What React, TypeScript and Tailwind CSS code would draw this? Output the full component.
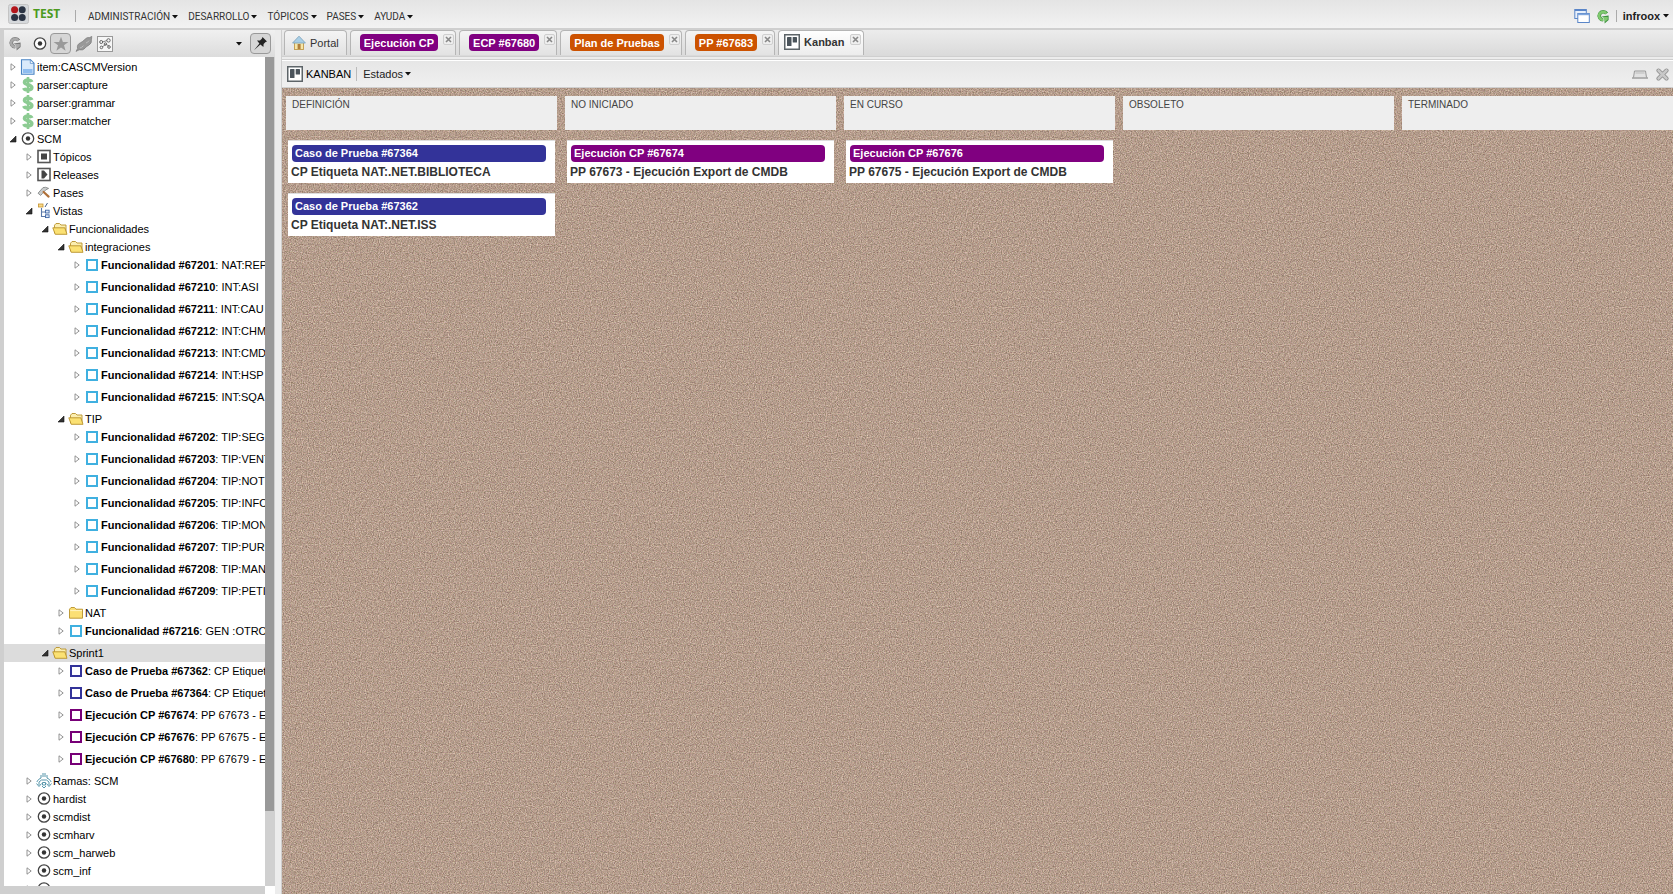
import React from "react";

type Kind =
  | "doc" | "dollar" | "target" | "topics" | "release" | "hammer" | "views"
  | "folderOpen" | "folder" | "sky" | "navy" | "purple" | "branch";

type Row = { level: number; icon: Kind; label?: string; strong?: string; open?: boolean; selected?: boolean };

const f = (level: number, id: string, label: string): Row => ({ level, icon: "sky", strong: `Funcionalidad #${id}`, label });

const rows: Row[] = [
  { level: 0, icon: "doc", label: "item:CASCMVersion" },
  { level: 0, icon: "dollar", label: "parser:capture" },
  { level: 0, icon: "dollar", label: "parser:grammar" },
  { level: 0, icon: "dollar", label: "parser:matcher" },
  { level: 0, icon: "target", label: "SCM", open: true },
  { level: 1, icon: "topics", label: "Tópicos" },
  { level: 1, icon: "release", label: "Releases" },
  { level: 1, icon: "hammer", label: "Pases" },
  { level: 1, icon: "views", label: "Vistas", open: true },
  { level: 2, icon: "folderOpen", label: "Funcionalidades", open: true },
  { level: 3, icon: "folderOpen", label: "integraciones", open: true },
  f(4, "67201", "NAT:REP"),
  f(4, "67210", "INT:ASI"),
  f(4, "67211", "INT:CAU"),
  f(4, "67212", "INT:CHM"),
  f(4, "67213", "INT:CMDB"),
  f(4, "67214", "INT:HSP"),
  f(4, "67215", "INT:SQA"),
  { level: 3, icon: "folderOpen", label: "TIP", open: true },
  f(4, "67202", "TIP:SEGU"),
  f(4, "67203", "TIP:VENT"),
  f(4, "67204", "TIP:NOTIF"),
  f(4, "67205", "TIP:INFOR"),
  f(4, "67206", "TIP:MONIT"),
  f(4, "67207", "TIP:PURG"),
  f(4, "67208", "TIP:MANT"),
  f(4, "67209", "TIP:PETIC"),
  { level: 3, icon: "folder", label: "NAT" },
  f(3, "67216", "GEN :OTROS"),
  { level: 2, icon: "folderOpen", label: "Sprint1", open: true, selected: true },
  { level: 3, icon: "navy", strong: "Caso de Prueba #67362", label: "CP Etiqueta" },
  { level: 3, icon: "navy", strong: "Caso de Prueba #67364", label: "CP Etiqueta" },
  { level: 3, icon: "purple", strong: "Ejecución CP #67674", label: "PP 67673 - Ejec" },
  { level: 3, icon: "purple", strong: "Ejecución CP #67676", label: "PP 67675 - Ejec" },
  { level: 3, icon: "purple", strong: "Ejecución CP #67680", label: "PP 67679 - Ejec" },
  { level: 1, icon: "branch", label: "Ramas: SCM" },
  { level: 1, icon: "target", label: "hardist" },
  { level: 1, icon: "target", label: "scmdist" },
  { level: 1, icon: "target", label: "scmharv" },
  { level: 1, icon: "target", label: "scm_harweb" },
  { level: 1, icon: "target", label: "scm_inf" },
  { level: 1, icon: "target" },
];

const indent = ["pl-[3px]", "pl-[19px]", "pl-[35px]", "pl-[51px]", "pl-[67px]"];

const Target = () => (
  <svg width="16" height="16" viewBox="0 0 16 16">
    <circle cx="8" cy="7.5" r="5.7" fill="#fff" stroke="#444" strokeWidth="1.3" />
    <circle cx="8" cy="7.5" r="2.2" fill="#333" />
  </svg>
);

const Board = () => (
  <svg width="16" height="16" viewBox="0 0 16 16">
    <rect x="0.75" y="0.75" width="14.5" height="14.5" fill="#fff" stroke="#5d6468" strokeWidth="1.5" />
    <rect x="3" y="3" width="4.5" height="9" rx=".6" fill="#4b545b" />
    <rect x="8.7" y="3" width="4.3" height="5.5" rx=".6" fill="#4b545b" />
  </svg>
);

const Swirl = ({ fill, edge }: { fill: string; edge: string }) => (
  <svg width="14" height="15" viewBox="0 0 14 15">
    <path d="M10.6 4.6 A4 4 0 1 0 7.2 10.8" fill="none" stroke={edge} strokeWidth="3.6" />
    <path d="M5.6 7.4 L12.6 6.6 V11 L8.6 14.4 V9 Z" fill={edge} />
    <path d="M10.2 4.6 A3.9 3.9 0 1 0 7.4 10.7" fill="none" stroke={fill} strokeWidth="2.4" />
    <path d="M7.4 8 H11.8 V10.6 L9 12.8 Z" fill={fill} />
  </svg>
);

function Icon({ kind }: { kind: Kind }) {
  switch (kind) {
    case "doc":
      return (
        <svg width="16" height="16" viewBox="0 0 16 16">
          <path d="M1.5 .7 H10.5 L14 4.2 V15.3 H1.5 Z" fill="#d9eafb" stroke="#4a84c4" strokeWidth="1.1" />
          <path d="M10.3 .8 V4.4 H14 Z" fill="#fff" stroke="#4a84c4" strokeWidth=".7" />
          <path d="M3 10 H12.5 V14 H3 Z" fill="#8fbdf0" />
        </svg>
      );
    case "dollar":
      return (
        <svg width="16" height="16" viewBox="0 0 16 16" fill="none" stroke="#8ccb92">
          <path d="M8 0 V16" strokeWidth="2.6" />
          <path d="M11.8 5 C11.2 2.6 4.4 2.2 4.4 5.2 C4.4 8.2 11.9 7.3 11.9 10.6 C11.9 13.8 4.6 13.6 3.8 11" strokeWidth="3.4" />
        </svg>
      );
    case "target":
      return <Target />;
    case "topics":
      return (
        <svg width="16" height="16" viewBox="0 0 16 16">
          <rect x="2" y="1.5" width="12" height="12" fill="#fff" stroke="#555" strokeWidth="1.6" />
          <rect x="5" y="4.5" width="6" height="6" fill="#444" />
        </svg>
      );
    case "release":
      return (
        <svg width="16" height="16" viewBox="0 0 16 16">
          <rect x="2" y="1.5" width="12" height="12" fill="#fff" stroke="#555" strokeWidth="1.6" />
          <path d="M5.5 3.5 L8 3.5 L11.5 7.5 L8 11.5 L5.5 11.5 Z" fill="#444" />
        </svg>
      );
    case "hammer":
      return (
        <svg width="16" height="16" viewBox="0 0 16 16">
          <path d="M2 8.2 L7 2.6 Q9.5 1.6 12.6 3.4 L9.6 5 L6.4 8.6 L4.6 10.4 Z" fill="#c9cccc" stroke="#7d8080" strokeWidth=".8" />
          <path d="M7.6 7 L12.6 11.6" stroke="#b0713a" strokeWidth="2.2" strokeLinecap="round" />
        </svg>
      );
    case "views":
      return (
        <svg width="16" height="16" viewBox="0 0 16 16">
          <rect x="2.5" y="1" width="4.5" height="3" fill="#f8d98a" stroke="#c6932e" strokeWidth=".8" />
          <path d="M11.5 0 L9 4" stroke="#445d86" />
          <path d="M5.5 5 V13.5 H10 M5.5 9 H10" fill="none" stroke="#5b78a8" strokeWidth="1.1" />
          <rect x="9.5" y="7.2" width="3.6" height="2.8" fill="#dbe6f6" stroke="#3f66a5" strokeWidth=".9" />
          <rect x="9.5" y="11.8" width="3.6" height="2.8" fill="#dbe6f6" stroke="#3f66a5" strokeWidth=".9" />
        </svg>
      );
    case "folderOpen":
      return (
        <svg width="16" height="16" viewBox="0 0 16 16">
          <path d="M2.5 12 V4.2 L4 2.5 H7.5 L9 4 H14 V12 Z" fill="#fbeeb0" stroke="#b8912a" strokeWidth=".9" />
          <path d="M.8 6.8 H12.8 L15 13.3 H3.2 Z" fill="#fbe173" stroke="#b8912a" strokeWidth=".9" />
        </svg>
      );
    case "folder":
      return (
        <svg width="16" height="16" viewBox="0 0 16 16">
          <path d="M1.5 13.2 V4.2 L3 2.5 H6.5 L8 4.2 H14.5 V13.2 Z" fill="#fbdf74" stroke="#b8912a" strokeWidth=".9" />
          <path d="M2.2 5.6 H14" stroke="#fff3c0" />
        </svg>
      );
    case "branch":
      return (
        <svg width="16" height="16" viewBox="0 0 16 16" fill="none" stroke="#5796ab" strokeWidth="1">
          <path d="M7 0 V4 M9 0 V4 M5 2 V5 L2.5 6.5 L.8 9 M11 2 V5 L13.5 6.5 L15.2 9 M3 9 L5.5 7 H10.5 L13 9 M.5 10.5 L3 13.5 L5.5 10.5 M10.5 10.5 L13 13.5 L15.5 10.5 M3 9 V12 M13 9 V12 M6.5 9.5 H9.5 V12 H6.5 Z M6 13 L8 15 L10 13" />
        </svg>
      );
    case "sky":
      return <span className="block size-3 border-2 border-[#3fb0e0] bg-white" />;
    case "navy":
      return <span className="block size-3 border-2 border-[#333399] bg-white" />;
    case "purple":
      return <span className="block size-3 border-2 border-[#770077] bg-white" />;
  }
}

const Caret = () => (
  <svg width="6" height="4" viewBox="0 0 6 4" className="shrink-0">
    <path d="M0 0 H6 L3 3.6 Z" fill="#111" />
  </svg>
);

function TreeRow({ row }: { row: Row }) {
  const box = row.icon === "sky" || row.icon === "navy" || row.icon === "purple";
  return (
    <li className={box ? "h-[22px]" : "h-[18px]"}>
      <div className={`flex h-[18px] items-center ${indent[row.level]} ${row.selected ? "bg-[#dcdcdc]" : ""}`}>
        <button type="button" aria-label="Expandir" className="flex w-3 shrink-0 justify-center">
          {row.open ? (
            <svg width="8" height="8" viewBox="0 0 8 8"><path d="M7 1 V7 H1 Z" fill="#333" stroke="#111" strokeWidth=".6" /></svg>
          ) : (
            <svg width="8" height="8" viewBox="0 0 8 8"><path d="M2 .8 L6.2 4 L2 7.2 Z" fill="#fff" stroke="#888" strokeWidth=".9" /></svg>
          )}
        </button>
        <span className="ml-px flex h-4 w-4 shrink-0 items-center justify-center"><Icon kind={row.icon} /></span>
        <span className="whitespace-nowrap pl-px">
          {row.strong && <b>{row.strong}</b>}
          {row.strong && ": "}
          {row.label}
        </span>
      </div>
    </li>
  );
}

const Close = () => (
  <button type="button" aria-label="Cerrar" className="flex size-[11px] shrink-0 items-center justify-center self-start rounded-xs border border-[#cfcfcf] bg-[#eeeeee]">
    <svg width="7" height="7" viewBox="0 0 7 7"><path d="M1 1 L6 6 M6 1 L1 6" stroke="#888" strokeWidth="1.6" /></svg>
  </button>
);

const tabs = [
  { label: "Ejecución CP", color: "bg-[#800080]" },
  { label: "ECP #67680", color: "bg-[#800080]" },
  { label: "Plan de Pruebas", color: "bg-[#cc5200]" },
  { label: "PP #67683", color: "bg-[#cc5200]" },
];

const columns = [
  { name: "DEFINICIÓN", cards: [
    { title: "Caso de Prueba #67364", text: "CP Etiqueta NAT:.NET.BIBLIOTECA", color: "bg-[#333399]" },
    { title: "Caso de Prueba #67362", text: "CP Etiqueta NAT:.NET.ISS", color: "bg-[#333399]" },
  ] },
  { name: "NO INICIADO", cards: [{ title: "Ejecución CP #67674", text: "PP 67673 - Ejecución Export de CMDB", color: "bg-[#800080]" }] },
  { name: "EN CURSO", cards: [{ title: "Ejecución CP #67676", text: "PP 67675 - Ejecución Export de CMDB", color: "bg-[#800080]" }] },
  { name: "OBSOLETO", cards: [] },
  { name: "TERMINADO", cards: [] },
];

const tool = "flex size-[21px] items-center justify-center";
const toolOn = "flex size-[21px] items-center justify-center rounded-sm border border-[#999] bg-[#d6d6d6]";
const tabBox = "flex h-[25px] shrink-0 rounded-t-sm border border-b-0 border-[#b5b5b5] bg-linear-to-b from-[#f4f4f4] to-[#e2e2e2]";

export default function App() {
  return (
    <div className="flex h-screen flex-col overflow-hidden bg-[#ececec] font-['Liberation_Sans',Arial,sans-serif] text-[11px] leading-4 text-black">
      <header className="flex h-[30px] shrink-0 items-center border-b-2 border-[#cfcfcf] bg-linear-to-b from-[#e4e4e4] to-[#f2f2f2] pl-2 text-[#222]">
        <svg width="21" height="20" viewBox="0 0 21 20">
          <rect x=".5" y=".5" width="20" height="19" rx="2" fill="#d5d8db" stroke="#c4c4c4" />
          <circle cx="6.6" cy="5.8" r="3.5" fill="#b3161c" />
          <circle cx="14.2" cy="5.8" r="3.5" fill="#2b3444" />
          <circle cx="6.6" cy="13.6" r="3.5" fill="#2b3444" />
          <circle cx="14.2" cy="13.6" r="3.5" fill="#2b3444" />
        </svg>
        <span className="ml-1 w-[42px] font-['Open_Sans',sans-serif] text-xs font-bold text-[#4c9a1e]">TEST</span>
        <span className="mt-1 h-3 w-px bg-[#aaa]" />
        <nav className="ml-3 flex gap-2.5 pt-1.5 font-[Roboto,sans-serif] text-[10px] text-[#333]">
          {["ADMINISTRACIÓN", "DESARROLLO", "TÓPICOS", "PASES", "AYUDA"].map((m) => (
            <button key={m} type="button" className="flex items-center gap-0.5">{m}<Caret /></button>
          ))}
        </nav>
        <div className="ml-auto flex items-center pt-1 pr-1">
          <button type="button" aria-label="Ventanas">
            <svg width="16" height="16" viewBox="0 0 16 16">
              <rect x=".8" y="1.5" width="11.5" height="9" fill="#e8f0fb" stroke="#5a86c8" />
              <path d="M.8 2.2 H12.3" stroke="#5a86c8" strokeWidth="1.6" />
              <rect x="3.8" y="5.5" width="11.5" height="9" fill="#fff" stroke="#5a86c8" />
              <path d="M3.8 6.4 H15.3" stroke="#7fa6dd" strokeWidth="1.6" />
            </svg>
          </button>
          <button type="button" aria-label="Actualizar" className="ml-1.5"><Swirl fill="#7fc96e" edge="#3c8f3e" /></button>
          <span className="ml-1.5 h-3 w-px bg-[#aaa]" />
          <button type="button" className="ml-1.5 flex items-center gap-[3px] font-bold">infroox<Caret /></button>
        </div>
      </header>

      <div className="flex min-h-0 flex-1">
        <aside className="flex w-[275px] shrink-0 flex-col border-l-4 border-[#cfcfcf]">
          <div className="flex h-[27px] shrink-0 items-center bg-linear-to-b from-[#f0f0f0] to-[#dcdcdc]">
            <button type="button" aria-label="Refrescar" className={tool}><Swirl fill="#aaa" edge="#777" /></button>
            <button type="button" aria-label="Proyectos" className={`${tool} ml-1`}><Target /></button>
            <button type="button" aria-label="Favoritos" className={toolOn}>
              <svg width="16" height="16" viewBox="0 0 16 16"><path d="M8 .8 L9.9 6 H15.4 L11 9.3 L12.6 14.8 L8 11.5 L3.4 14.8 L5 9.3 L.6 6 H6.1 Z" fill="#9a9a9a" /></svg>
            </button>
            <button type="button" aria-label="Etiquetas" className={`${tool} ml-0.5`}>
              <svg width="18" height="16" viewBox="0 0 18 16"><path d="M1 15.4 L2.6 12.6 Q1.6 8.4 5.4 6.8 Q8 5.6 9.6 3.6 Q12 .8 14.6 1.6 L16.8 .4 L16.4 3.8 Q17 7.4 13.8 9.2 Q11.6 10 10 12.2 Q7.6 14.8 4.2 13.8 Z" fill="#999" stroke="#7a7a7a" strokeWidth=".7" /><path d="M5 12 Q7 11.6 8.4 9.6 M11 7 Q13 6.4 14 4.6" fill="none" stroke="#bdbdbd" /></svg>
            </button>
            <button type="button" aria-label="Grafo" className={tool}>
              <svg width="16" height="16" viewBox="0 0 16 16" fill="none" stroke="#666">
                <rect x=".5" y=".5" width="15" height="15" fill="#f6f6f6" stroke="#999" />
                <path d="M5.5 6 L10 4.5 M5 11 L9 8.4 L12 10" strokeWidth=".8" />
                <circle cx="4.2" cy="6" r="1.5" /><circle cx="11.5" cy="4.4" r="1.7" /><circle cx="4.4" cy="11.4" r="1.3" /><circle cx="12" cy="11" r="1.3" /><circle cx="8.4" cy="8" r="1.2" />
              </svg>
            </button>
            <span className="ml-auto"><Caret /></span>
            <button type="button" aria-label="Fijar" className={`${toolOn} mr-1 ml-2`}>
              <svg width="15" height="15" viewBox="0 0 15 15"><path d="M9.5 1 L14 5.5 L12.6 6 L10.6 8 L10.4 11 L7.4 8.4 L1 14.2 L6.4 7.5 L4 4.6 L7 4.4 L9 2.4 Z" fill="#222" /></svg>
            </button>
          </div>
          <div className="flex min-h-0 flex-1 bg-white">
            <ul className="min-w-0 flex-1 overflow-hidden pt-px">
              {rows.map((r, i) => <TreeRow key={i} row={r} />)}
            </ul>
            <div className="w-[9px] shrink-0 bg-[#d0d0d0]"><div className="h-[91%] bg-[#999]" /></div>
            <div className="w-px shrink-0 bg-[#d0d0d0]" />
          </div>
          <div className="flex h-2 shrink-0 bg-[#cfcfcf]"><span className="ml-auto w-2.5 bg-white" /></div>
        </aside>

        <div className="w-[7px] shrink-0 border-r border-[#cfcfcf] bg-[#ececec]" />

        <main className="flex min-w-0 flex-1 flex-col">
          <div className="flex h-[27px] shrink-0 items-end gap-[3px] border-b border-[#cfcfcf] bg-linear-to-b from-[#ececec] to-[#dadada] pb-px pl-0.5">
            <button type="button" className={`${tabBox} items-center gap-[3px] pr-[7px] pl-1.5 text-[#333]`}>
              <svg width="16" height="16" viewBox="0 0 16 16">
                <rect x="3.5" y="7" width="9" height="7.5" fill="#f6e6a8" stroke="#c09a4a" strokeWidth=".9" />
                <path d="M8 1.2 L14.4 8 H1.6 Z" fill="#a9cfe6" stroke="#7fa6c0" strokeWidth=".9" />
                <rect x="6.6" y="9" width="3" height="5" fill="#b07f3c" />
              </svg>
              Portal
            </button>
            {tabs.map((t) => (
              <div key={t.label} className={`${tabBox} gap-[5px] pt-[3px] pr-px pl-[9px]`}>
                <button type="button" className={`h-[17px] rounded-sm px-1 font-bold text-white ${t.color}`}>{t.label}</button>
                <Close />
              </div>
            ))}
            <div className="flex h-[25px] shrink-0 gap-1.5 rounded-t-sm border border-b-0 border-[#b5b5b5] bg-linear-to-b from-white to-[#ececec] pt-[3px] pr-0.5 pl-[5px]">
              <button type="button" className="flex h-4 items-center gap-1 font-bold text-[#333]"><Board />Kanban</button>
              <Close />
            </div>
          </div>
          <div className="h-[3px] shrink-0 border-b border-[#cfcfcf] bg-[#ececec]" />
          <div className="flex h-7 shrink-0 items-center border-t border-b border-t-white border-b-[#cfcfcf] bg-linear-to-b from-[#e6e6e6] to-[#f0f0f0] pr-1 pl-[5px]">
            <Board />
            <h1 className="ml-[3px]">KANBAN</h1>
            <span className="ml-[5px] h-3.5 w-px bg-[#bbb]" />
            <button type="button" className="ml-1.5 flex items-center gap-0.5 text-[#222]">Estados<Caret /></button>
            <div className="ml-auto flex items-center gap-2">
              <button type="button" aria-label="Minimizar">
                <svg width="16" height="9" viewBox="0 0 16 9"><path d="M1.5 7.5 L2.5 1 H13.5 L14.5 7.5" fill="#e2e2e2" stroke="#999" /><path d="M0 8 H16" stroke="#999" strokeWidth="1.4" /><path d="M3.5 3 H12.5" stroke="#bbb" /></svg>
              </button>
              <button type="button" aria-label="Cerrar panel">
                <svg width="13" height="13" viewBox="0 0 13 13"><path d="M2.5 2.5 L10.5 10.5 M10.5 2.5 L2.5 10.5" stroke="#888" strokeWidth="4" strokeLinecap="round" /><path d="M2.5 2.5 L10.5 10.5 M10.5 2.5 L2.5 10.5" stroke="#c8c8c8" strokeWidth="2.6" strokeLinecap="round" /></svg>
              </button>
            </div>
          </div>
          <div className="relative min-h-0 flex-1 overflow-hidden bg-[#b8a08d]">
            <svg className="absolute inset-0 size-full" aria-hidden="true">
              <filter id="cork" x="0" y="0" width="100%" height="100%" colorInterpolationFilters="sRGB">
                <feTurbulence type="fractalNoise" baseFrequency="0.83 0.87" numOctaves="2" seed="4" />
                <feColorMatrix values="0.1 0 0 0.46 0.43  0 0.1 0 0.46 0.335  0 0 0.1 0.44 0.28  0 0 0 0 1" />
              </filter>
              <rect width="100%" height="100%" filter="url(#cork)" />
            </svg>
            <div className="relative flex gap-2 px-1 pt-2">
              {columns.map((c) => (
                <section key={c.name} className="w-[271px] shrink-0">
                  <h2 className="h-[34px] bg-[#eeeeee] px-1.5 pt-px text-[10px] text-[#444]">{c.name}</h2>
                  <div className="flex flex-col gap-2.5 px-0.5 pt-2.5">
                    {c.cards.map((k) => (
                      <article key={k.title} className="h-[43px] border-t border-[#ddd] bg-white px-[3px] pt-1 text-xs font-bold text-[#333]">
                        <div className={`mr-1.5 ml-px h-[17px] rounded-sm px-[3px] text-[11px] leading-4 text-white ${k.color}`}>{k.title}</div>
                        <p className="mt-px leading-[18px]">{k.text}</p>
                      </article>
                    ))}
                  </div>
                </section>
              ))}
            </div>
          </div>
        </main>
      </div>
    </div>
  );
}
